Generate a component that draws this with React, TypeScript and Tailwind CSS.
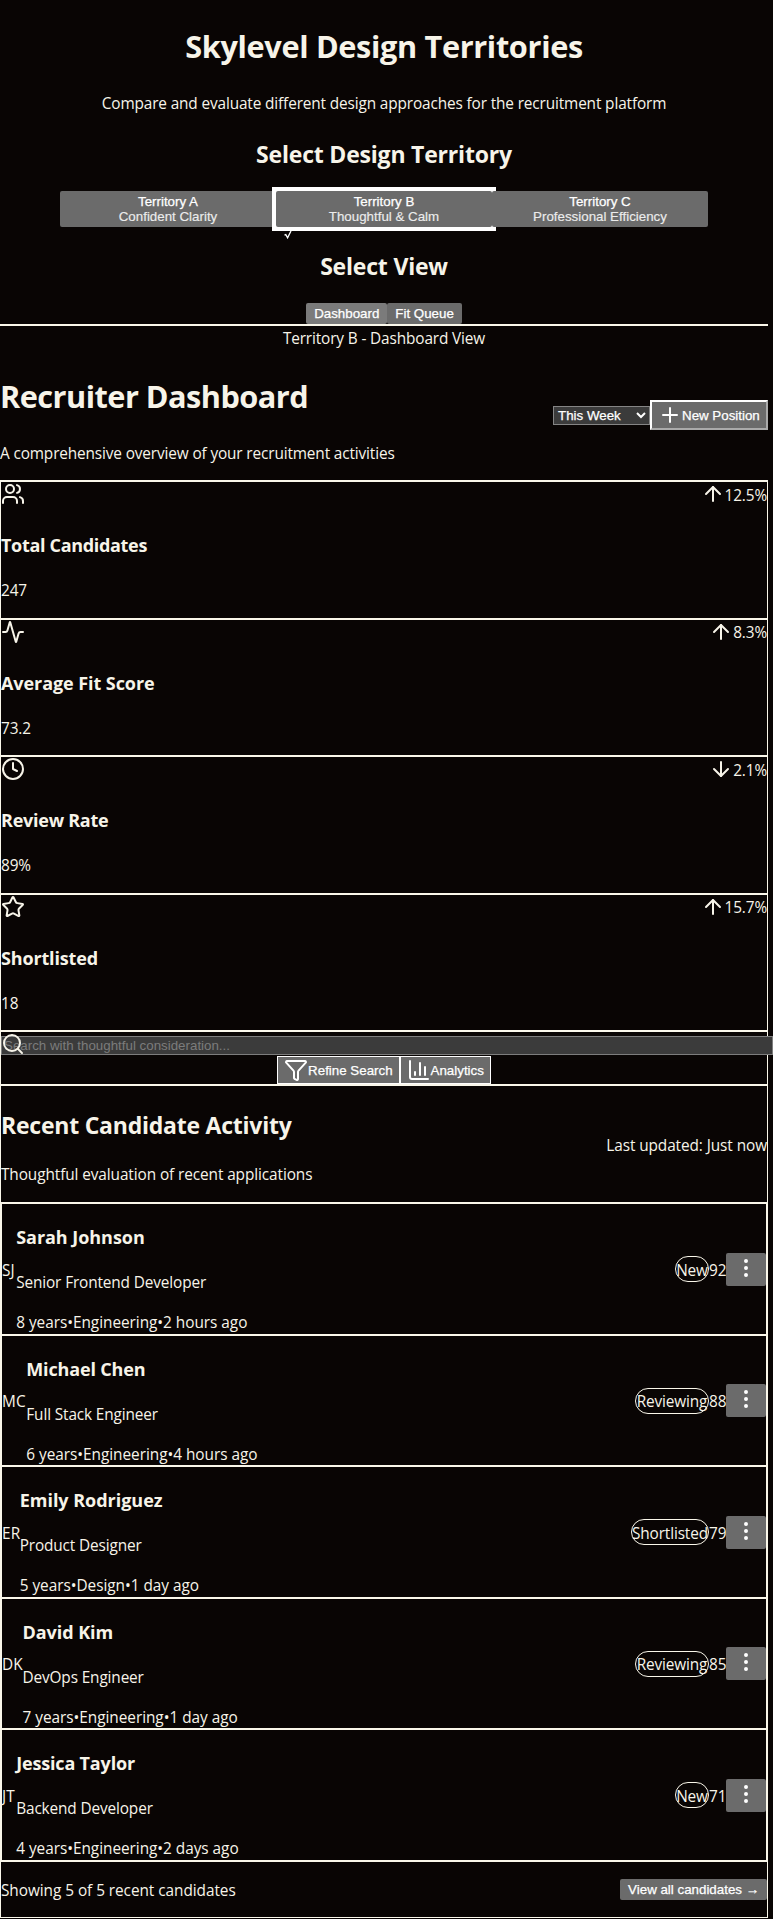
import {
  Activity, ArrowDown, ArrowUp, ChartColumn, Clock, EllipsisVertical, Funnel, Plus, Search, Star, Users,
  type LucideIcon,
} from "lucide-react";

type Stat = { icon: LucideIcon; label: string; labelTracking: string; value: string; change: string; up: boolean };
type Candidate = {
  initials: string; initialsWidth: string; name: string; nameTracking: string; role: string;
  meta: string[]; status: string; statusWidth: string; score: number;
};

const territories = [
  { name: "Territory A", tagline: "Confident Clarity" },
  { name: "Territory B", tagline: "Thoughtful & Calm", selected: true },
  { name: "Territory C", tagline: "Professional Efficiency" },
];

const stats: Stat[] = [
  { icon: Users, label: "Total Candidates", labelTracking: "tracking-[-0.32px]", value: "247", change: "12.5%", up: true },
  { icon: Activity, label: "Average Fit Score", labelTracking: "tracking-[-0.07px]", value: "73.2", change: "8.3%", up: true },
  { icon: Clock, label: "Review Rate", labelTracking: "tracking-[-0.25px]", value: "89%", change: "2.1%", up: false },
  { icon: Star, label: "Shortlisted", labelTracking: "tracking-[-0.16px]", value: "18", change: "15.7%", up: true },
];

const candidates: Candidate[] = [
  { initials: "SJ", initialsWidth: "w-[14.2px]", name: "Sarah Johnson", nameTracking: "tracking-[-0.04px]", role: "Senior Frontend Developer", meta: ["8 years", "Engineering", "2 hours ago"], status: "New", statusWidth: "w-[34px]", score: 92 },
  { initials: "MC", initialsWidth: "w-[24.3px]", name: "Michael Chen", nameTracking: "tracking-[-0.16px]", role: "Full Stack Engineer", meta: ["6 years", "Engineering", "4 hours ago"], status: "Reviewing", statusWidth: "w-[74px]", score: 88 },
  { initials: "ER", initialsWidth: "w-[17.7px]", name: "Emily Rodriguez", nameTracking: "tracking-[-0.02px]", role: "Product Designer", meta: ["5 years", "Design", "1 day ago"], status: "Shortlisted", statusWidth: "w-[78px]", score: 79 },
  { initials: "DK", initialsWidth: "w-[20.5px]", name: "David Kim", nameTracking: "tracking-[-0.05px]", role: "DevOps Engineer", meta: ["7 years", "Engineering", "1 day ago"], status: "Reviewing", statusWidth: "w-[74px]", score: 85 },
  { initials: "JT", initialsWidth: "w-[14.2px]", name: "Jessica Taylor", nameTracking: "tracking-[-0.17px]", role: "Backend Developer", meta: ["4 years", "Engineering", "2 days ago"], status: "New", statusWidth: "w-[34px]", score: 71 },
];

const sans = "font-['Open_Sans',sans-serif]";
const arial = "font-['Liberation_Sans',Arial,sans-serif] text-[13.33px] leading-[15px] tracking-normal text-white [-webkit-text-stroke:0.25px_#ffffff]";
const h1 = "my-[21.44px] pt-[3px] text-[30.7px] leading-[45px] font-bold whitespace-nowrap";
const h2 = "pt-[2px] text-[23px] leading-[34px] font-bold whitespace-nowrap";
const h3 = "my-[18.72px] pt-[1.2px] text-[18px] leading-[26.88px] font-bold whitespace-nowrap";
const body = "pt-[3.4px] leading-[20.6px] whitespace-nowrap";

function StatCard({ icon: Icon, label, labelTracking, value, change, up }: Stat) {
  const Arrow = up ? ArrowUp : ArrowDown;
  return (
    <div className="h-[137.5px] border-y border-[#faf7ea]">
      <div className="flex h-[30px] items-start justify-between">
        <Icon size={24} />
        <div className="flex items-start">
          <Arrow size={24} />
          <span className={body}>{change}</span>
        </div>
      </div>
      <h3 className={`${h3} ${labelTracking}`}>{label}</h3>
      <p className={body}>{value}</p>
    </div>
  );
}

function CandidateRow({ initials, initialsWidth, name, nameTracking, role, meta, status, statusWidth, score }: Candidate) {
  return (
    <div className="flex h-[131.5px] items-center border border-[#faf7ea]">
      <div className={`${body} ${initialsWidth} shrink-0 tracking-[0.2px]`}>{initials}</div>
      <div className="grow self-start">
        <h3 className={`${h3} ${nameTracking}`}>{name}</h3>
        <p className={body}>{role}</p>
        <div className={`${body} mt-4 tracking-[-0.03px]`}>{meta.join("•")}</div>
      </div>
      <span className={`${body} ${statusWidth} flex h-[26px] justify-center rounded-full border border-[#faf7ea]`}>{status}</span>
      <span className={`${body} w-[17px]`}>{score}</span>
      <button className="h-[33px] w-10 rounded-[2px] bg-[#6b6b6b] px-2 pt-[3px] pb-[6px] text-white">
        <EllipsisVertical size={24} />
      </button>
    </div>
  );
}

export default function App() {
  return (
    <div className="min-h-[1919px] w-[773px] overflow-hidden bg-[#090504]">
      <div className={`${sans} flex w-[768px] flex-col text-[15.36px] tracking-[-0.13px] text-[#f7f4e9]`}>
        <header className="flex h-[326px] flex-col items-center border-b-2 border-[#faf7ea]">
          <h1 className={`${h1} tracking-[-0.34px]`}>Skylevel Design Territories</h1>
          <p className={body}>Compare and evaluate different design approaches for the recruitment platform</p>
          <h2 className={`${h2} my-[19.92px] tracking-[-0.2px]`}>Select Design Territory</h2>
          <div className="flex">
            {territories.map((t) => (
              <div key={t.name} className={t.selected ? "relative bg-white ring-4 ring-white" : "relative"}>
                <button className={`${arial} block h-9 w-[216px] rounded-[2px] bg-[#6b6b6b]`}>
                  {t.name}
                  <div className="text-[#ececec] [-webkit-text-stroke:0.15px_#ececec]">{t.tagline}</div>
                </button>
                {t.selected && (
                  <svg className="absolute top-10 left-2" width="8" height="8" viewBox="0 0 8 8" fill="none" stroke="#ffffff">
                    <path d="M0.5 4.2 1.8 3.6 3.6 6.8 7 0" strokeWidth="1.3" />
                  </svg>
                )}
              </div>
            ))}
          </div>
          <h2 className={`${h2} mt-[19.92px] tracking-[-0.2px]`}>Select View</h2>
          <div className="mt-auto flex">
            <button className={`${arial} h-[21px] rounded-[2px] bg-[#7b7b7b] px-2`}>Dashboard</button>
            <button className={`${arial} h-[21px] rounded-[2px] bg-[#6b6b6b] px-2`}>Fit Queue</button>
          </div>
        </header>
        <div className={`${body} text-center`}>Territory B - Dashboard View</div>

        <div className="flex h-[130.3px] items-center justify-between">
          <div>
            <h1 className={`${h1} tracking-[-0.52px]`}>Recruiter Dashboard</h1>
            <p className={`${body} mb-4`}>A comprehensive overview of your recruitment activities</p>
          </div>
          <div className="flex items-center">
            <div className={`${arial} flex h-[19px] w-[97px] items-center justify-between border border-[#858585] bg-[#3b3b3b] pr-[3px] pl-1`}>
              This Week
              <svg width="10" height="7" viewBox="0 0 10 7" fill="none" stroke="#ffffff" strokeWidth="2">
                <path d="M1 1l4 4 4-4" />
              </svg>
            </div>
            <button className={`${arial} flex h-[30px] w-[118px] items-center border-2 border-t-white border-r-[#aaaaaa] border-b-[#aaaaaa] border-l-white bg-[#6b6b6b] pl-1.5 whitespace-nowrap`}>
              <Plus size={24} className="shrink-0" />
              New Position
            </button>
          </div>
        </div>

        <main className="border border-[#faf7ea]">
          {stats.map((s) => <StatCard key={s.label} {...s} />)}

          <section className="h-[53.7px] border-y border-[#faf7ea]">
            <div className="relative h-[24px] pt-[4px]">
              <div className="h-[19px] w-[772px] border border-[#7d7d7d] bg-[#3b3b3b] px-[2px] font-['Liberation_Sans',Arial,sans-serif] text-[13.33px] leading-[17px] tracking-normal text-[#7c7c7c]">
                Search with thoughtful consideration...
              </div>
              <Search size={24} className="absolute top-0 left-0" />
            </div>
            <div className="flex justify-center">
              <button className={`${arial} flex h-7 items-center border border-white bg-[#6b6b6b] px-1.5`}>
                <Funnel size={24} />
                Refine Search
              </button>
              <button className={`${arial} flex h-7 items-center border border-white bg-[#6b6b6b] px-1.5`}>
                <ChartColumn size={24} />
                Analytics
              </button>
            </div>
          </section>

          <section className="border-t border-[#faf7ea]">
            <div className="flex h-[116.4px] items-center justify-between">
              <div>
                <h2 className={`${h2} my-[19.92px] tracking-[-0.23px]`}>Recent Candidate Activity</h2>
                <p className={`${body} mb-4 tracking-[-0.09px]`}>Thoughtful evaluation of recent applications</p>
              </div>
              <span className={`${body} tracking-[-0.08px]`}>Last updated: Just now</span>
            </div>
            <div className="-mx-px border border-[#faf7ea]">
              {candidates.map((c) => <CandidateRow key={c.name} {...c} />)}
            </div>
            <div className="flex h-[55.6px] items-center justify-between">
              <p className={`${body} tracking-[-0.05px]`}>Showing 5 of 5 recent candidates</p>
              <button className={`${arial} h-[21px] rounded-[2px] bg-[#6b6b6b] px-2 whitespace-nowrap`}>View all candidates →</button>
            </div>
          </section>
        </main>
      </div>
    </div>
  );
}
